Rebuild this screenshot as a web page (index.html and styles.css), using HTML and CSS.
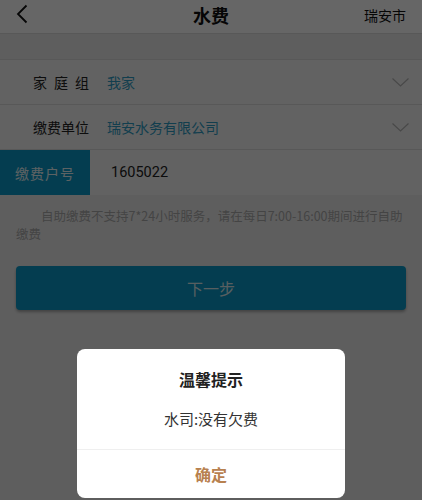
FILE: index.html
```html
<!DOCTYPE html>
<html lang="zh-CN">
<head>
<meta charset="utf-8">
<title>水费</title>
<link rel="stylesheet" href="styles.css">
</head>
<body>
<div class="page">
  <header class="topbar">
    <span class="back">
      <svg width="12" height="20" viewBox="0 0 12 20"><polyline points="10.5,1.5 2,10 10.5,18.5" fill="none" stroke="#111" stroke-width="1.8"/></svg>
    </span>
    <h1 class="title">水费</h1>
    <span class="city">瑞安市</span>
  </header>

  <section class="form">
    <div class="row">
      <span class="label spaced">家庭组</span>
      <span class="value">我家</span>
      <svg class="chev" width="17" height="9" viewBox="0 0 17 9"><polyline points="0.5,0.5 8.5,8 16.5,0.5" fill="none" stroke="#b5b5b5" stroke-width="1.2"/></svg>
    </div>
    <div class="row">
      <span class="label">缴费单位</span>
      <span class="value">瑞安水务有限公司</span>
      <svg class="chev" width="17" height="9" viewBox="0 0 17 9"><polyline points="0.5,0.5 8.5,8 16.5,0.5" fill="none" stroke="#b5b5b5" stroke-width="1.2"/></svg>
    </div>
    <div class="row row-input">
      <span class="tag">缴费户号</span>
      <span class="input">1605022</span>
    </div>
  </section>

  <p class="notice">自助缴费不支持7*24小时服务，请在每日7:00-16:00期间进行自助缴费</p>

  <div class="actions">
    <button class="next">下一步</button>
  </div>
</div>

<div class="mask"></div>
<div class="dialog">
  <div class="dialog-title">温馨提示</div>
  <div class="dialog-msg">水司:没有欠费</div>
  <div class="dialog-btn">确定</div>
</div>
</body>
</html>
```

FILE: styles.css
```css
* { box-sizing: border-box; }
html, body {
  margin: 0;
  padding: 0;
  height: 100%;
}
body {
  background: #ececec;
  font-family: "Noto Sans CJK SC", "Noto Sans", sans-serif;
  color: #333;
}
.page {
  width: 422px;
  min-height: 500px;
  background: #ececec;
}
.topbar {
  height: 34px;
  background: #fff;
  border-bottom: 1px solid #dcdcdc;
  display: flex;
  align-items: center;
  justify-content: space-between;
  padding: 0 16px 0 16px;
  position: relative;
}
.back {
  display: flex;
  align-items: center;
  height: 34px;
  margin-top: -6px;
}
.title {
  position: absolute;
  left: 0;
  right: 0;
  text-align: center;
  margin: 0;
  font-size: 18px;
  font-weight: bold;
  line-height: 30px;
  top: 0;
  color: #111;
  pointer-events: none;
}
.city {
  font-size: 14px;
  color: #111;
  margin-top: -4px;
}
.form {
  margin-top: 25px;
  border-top: 1px solid #dcdcdc;
  background: #f5f5f5;
}
.row {
  height: 45px;
  display: flex;
  align-items: center;
  border-bottom: 1px solid #dcdcdc;
  padding: 0 13px 0 33px;
}
.label {
  width: 74px;
  font-size: 14px;
  color: #222;
}
.label.spaced {
  letter-spacing: 7px;
}
.value {
  flex: 1;
  font-size: 14px;
  color: #2f9cc4;
}
.chev {
  display: block;
}
.row-input {
  padding: 0;
  border-bottom: none;
}
.tag {
  width: 90px;
  height: 100%;
  background: #0a9ac8;
  color: #e6f4f8;
  font-size: 14px;
  display: flex;
  align-items: center;
  justify-content: center;
  letter-spacing: 1px;
}
.input {
  padding-left: 21px;
  font-family: Roboto, "Noto Sans", sans-serif;
  font-size: 14.5px;
  color: #222;
}
.notice {
  margin: 0;
  padding: 12px 13px 0 16px;
  font-size: 12.5px;
  line-height: 18px;
  text-indent: 2em;
  color: #aaa;
}
.actions {
  padding: 23px 16px 0 16px;
}
.next {
  display: block;
  width: 100%;
  height: 44px;
  border: none;
  border-radius: 4px;
  background: #0a9ac8;
  color: #dcecf1;
  font-family: "Noto Sans CJK SC", sans-serif;
  font-size: 16px;
  box-shadow: 0 2px 3px rgba(0,0,0,0.3);
}
.mask {
  position: fixed;
  inset: 0;
  background: rgba(0, 0, 0, 0.6);
}
.dialog {
  position: fixed;
  left: 77px;
  top: 349px;
  width: 268px;
  height: 149px;
  background: #fff;
  border-radius: 8px;
  display: flex;
  flex-direction: column;
  align-items: center;
  text-align: center;
}
.dialog-title {
  margin-top: 19px;
  font-size: 16px;
  font-weight: bold;
  line-height: 22px;
  color: #222;
}
.dialog-msg {
  margin-top: 18px;
  font-size: 15px;
  line-height: 22px;
  color: #333;
}
.dialog-btn {
  margin-top: auto;
  width: 100%;
  height: 49px;
  border-top: 1px solid #efefef;
  display: flex;
  align-items: center;
  justify-content: center;
  font-size: 16px;
  font-weight: bold;
  color: #b8814f;
}
```
